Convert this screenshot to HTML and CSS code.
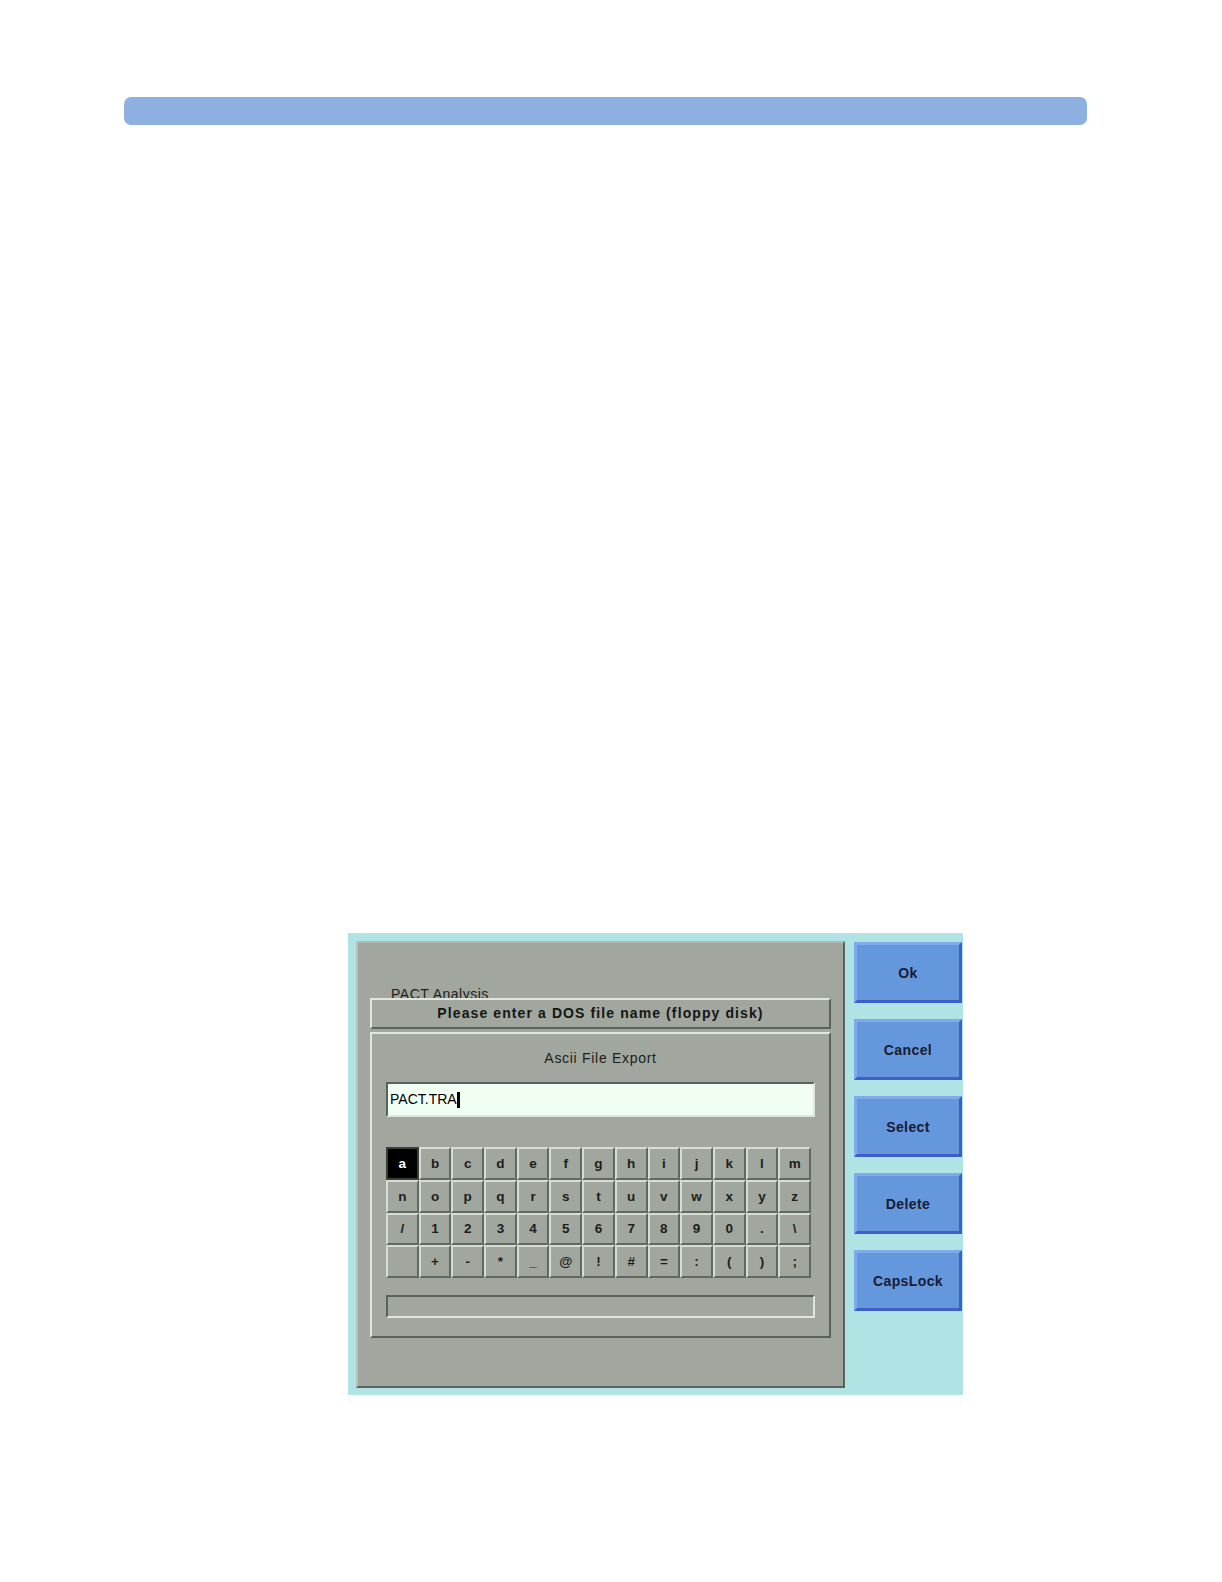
FILE: index.html
```html
<!DOCTYPE html>
<html lang="en">
<head>
<meta charset="utf-8">
<title>PACT Analysis - Ascii File Export</title>
<link rel="stylesheet" href="styles.css">
</head>
<body>
<div class="page">
  <div class="topbar"></div>
  <div class="screen">
    <div class="panel">
      <div class="label">PACT Analysis</div>
      <div class="header">Please enter a DOS file name (floppy disk)</div>
      <div class="inner">
        <div class="title">Ascii File Export</div>
        <div class="input">PACT.TRA<span class="cursor"></span></div>
        <div class="keys">
          <div class="key sel">a</div><div class="key">b</div><div class="key">c</div><div class="key">d</div><div class="key">e</div><div class="key">f</div><div class="key">g</div><div class="key">h</div><div class="key">i</div><div class="key">j</div><div class="key">k</div><div class="key">l</div><div class="key">m</div>
          <div class="key">n</div><div class="key">o</div><div class="key">p</div><div class="key">q</div><div class="key">r</div><div class="key">s</div><div class="key">t</div><div class="key">u</div><div class="key">v</div><div class="key">w</div><div class="key">x</div><div class="key">y</div><div class="key">z</div>
          <div class="key">/</div><div class="key">1</div><div class="key">2</div><div class="key">3</div><div class="key">4</div><div class="key">5</div><div class="key">6</div><div class="key">7</div><div class="key">8</div><div class="key">9</div><div class="key">0</div><div class="key">.</div><div class="key">\</div>
          <div class="key"></div><div class="key">+</div><div class="key">-</div><div class="key">*</div><div class="key">_</div><div class="key">@</div><div class="key">!</div><div class="key">#</div><div class="key">=</div><div class="key">:</div><div class="key">(</div><div class="key">)</div><div class="key">;</div>
        </div>
        <div class="field"></div>
      </div>
    </div>
    <div class="buttons">
      <div class="btn">Ok</div>
      <div class="btn">Cancel</div>
      <div class="btn">Select</div>
      <div class="btn">Delete</div>
      <div class="btn">CapsLock</div>
    </div>
  </div>
</div>
</body>
</html>
```
FILE: styles.css
```css
html, body {
  margin: 0;
  padding: 0;
  background: #ffffff;
}
body {
  font-family: "Liberation Sans", Arial, sans-serif;
  color: #1c1f1c;
}
.page {
  width: 1222px;
  height: 1582px;
  overflow: hidden;
}
.topbar {
  margin: 97px 0 0 124px;
  width: 963px;
  height: 28px;
  border-radius: 7px;
  background: #8db0e0;
}
.screen {
  margin: 808px 0 0 348px;
  width: 615px;
  height: 462px;
  box-sizing: border-box;
  padding: 8px 0 7px 8px;
  background: #b0e3e3;
  display: flex;
  gap: 9px;
}
.panel {
  width: 489px;
  height: 447px;
  box-sizing: border-box;
  background: #a1a69e;
  border-left: 2px solid #b9bfb6;
  border-top: 2px solid #b4bab1;
  border-right: 2px solid #5b625b;
  border-bottom: 2px solid #5b625b;
  padding: 0 12px;
}
.label {
  margin-top: 43px;
  height: 12px;
  line-height: 16px;
  overflow: hidden;
  padding-left: 21px;
  font-size: 14px;
  letter-spacing: 0.5px;
  color: #1c1f1c;
}
.header {
  height: 31px;
  box-sizing: border-box;
  border-top: 2px solid #dfe6dd;
  border-left: 2px solid #dfe6dd;
  border-right: 2px solid #5b625b;
  border-bottom: 2px solid #5b625b;
  text-align: center;
  font-weight: bold;
  font-size: 14px;
  letter-spacing: 1.1px;
  line-height: 27px;
  color: #141614;
}
.inner {
  margin-top: 3px;
  height: 306px;
  box-sizing: border-box;
  border-top: 2px solid #dfe6dd;
  border-left: 2px solid #dfe6dd;
  border-right: 2px solid #5b625b;
  border-bottom: 2px solid #5b625b;
  padding: 16px 14px 0 14px;
}
.title {
  text-align: center;
  font-size: 14px;
  letter-spacing: 0.7px;
  line-height: 16px;
  color: #1c1f1c;
}
.input {
  margin-top: 16px;
  height: 35px;
  box-sizing: border-box;
  background: #f0fff2;
  border-top: 2px solid #5b625b;
  border-left: 2px solid #5b625b;
  border-right: 2px solid #dfe6dd;
  border-bottom: 2px solid #dfe6dd;
  padding-left: 2px;
  font-size: 14px;
  line-height: 31px;
  color: #000;
  display: flex;
  align-items: center;
}
.cursor {
  display: inline-block;
  width: 3px;
  height: 16px;
  background: #000;
}
.keys {
  margin-top: 30px;
  width: 425px;
  height: 131px;
  display: grid;
  grid-template-columns: repeat(13, 1fr);
  grid-template-rows: repeat(4, 1fr);
}
.key {
  box-sizing: border-box;
  border-top: 2px solid #d6ded4;
  border-left: 2px solid #d6ded4;
  border-right: 2px solid #616861;
  border-bottom: 2px solid #616861;
  display: flex;
  align-items: center;
  justify-content: center;
  font-size: 13.5px;
  font-weight: bold;
  color: #1c1f1c;
}
.key.sel {
  background: #000;
  color: #fff;
  border-color: #3a3f3a;
}
.field {
  margin-top: 17px;
  height: 23px;
  box-sizing: border-box;
  border-top: 2px solid #5b625b;
  border-left: 2px solid #5b625b;
  border-right: 2px solid #dfe6dd;
  border-bottom: 2px solid #dfe6dd;
}
.buttons {
  padding-top: 1px;
  display: flex;
  flex-direction: column;
  gap: 16px;
}
.btn {
  width: 108px;
  height: 61px;
  box-sizing: border-box;
  background: #6597dc;
  border-top: 3px solid #7fabec;
  border-left: 3px solid #7fabec;
  border-right: 3px solid #3c5fcc;
  border-bottom: 3px solid #3c5fcc;
  display: flex;
  align-items: center;
  justify-content: center;
  font-size: 14px;
  font-weight: bold;
  letter-spacing: 0.4px;
  color: #171c36;
}
```
